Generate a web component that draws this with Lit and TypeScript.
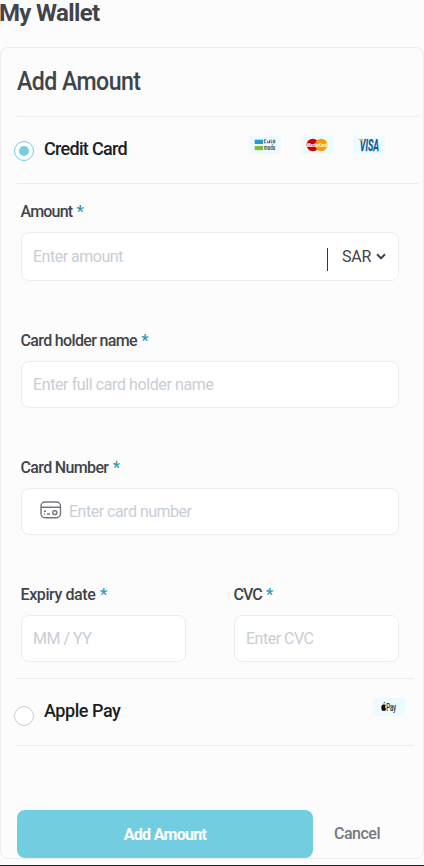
import { LitElement, html, css, svg } from "lit";
import { customElement, property } from "lit/decorators.js";

@customElement("pay-badge")
class PayBadge extends LitElement {
  @property() kind = "visa";
  static styles = css`
    :host { display: block; width: 32px; height: 18px; background: #ebfbff; }
    svg { display: block; overflow: visible; }
    text { font-family: Roboto, "Liberation Sans", sans-serif; }
  `;
  private art() {
    switch (this.kind) {
      case "mada":
        return svg`
          <rect x="5.700" y="3.700" width="8.300" height="4.300" fill="#259bd6"></rect>
          <rect x="5.700" y="10" width="8.300" height="4.200" fill="#84b740"></rect>
          <path d="M17.300 3.800h-2v3h2M18.700 4.600v2.200h1.800v-2.500M22 3.500v3.300h1.300M24.200 4.200h1.600v2.600h-1.600z" fill="none" stroke="#4b5054" stroke-width=".9"></path>
          <text x="14.800" y="14.200" font-size="6.500" font-weight="700" textLength="11.400" lengthAdjust="spacingAndGlyphs" fill="#4b5054">mada</text>`;
      case "mastercard":
        return svg`
          <circle cx="11.800" cy="9" r="6.200" fill="#cc0000"></circle>
          <circle cx="20.200" cy="9" r="6.200" fill="#ff9900"></circle>
          <text x="6" y="11" font-size="5.600" font-weight="900" font-style="italic" textLength="19.800" lengthAdjust="spacingAndGlyphs" fill="#fff">MasterCard</text>`;
      case "apple":
        return svg`
          <path d="M10.600 5.800c0-1 .6-1.800 1.300-2 .1 1-.5 1.900-1.300 2zM8.300 9.500c0-2 1-3.300 2.200-3 .5.200.6.200 1 0 .5-.2 1-.1 1.400.6-1 .9-.9 3 .2 3.700-.5 1.700-1.100 2.400-1.800 2.100-.4-.2-.7-.2-1.100 0-1 .4-1.900-1.400-1.900-3.400z" fill="#111"></path>
          <text x="13.200" y="12.600" font-size="10.500" textLength="9.800" lengthAdjust="spacingAndGlyphs" fill="#222" stroke="#222" stroke-width=".2">Pay</text>`;
      default:
        return svg`
          <text x="6.800" y="14.800" font-size="16" font-weight="700" font-style="italic" textLength="19.200" lengthAdjust="spacingAndGlyphs" fill="#0e5a9d" stroke="#0e5a9d" stroke-width=".25">VISA</text>
          <path d="M5.800 3h3.600l.9 4.500c-.8-1.600-2.200-2.900-4.500-3.700z" fill="#f5a623"></path>`;
    }
  }
  render() {
    return html`<svg width="32" height="18" viewBox="0 0 32 18">${this.art()}</svg>`;
  }
}

@customElement("form-field")
class FormField extends LitElement {
  @property() label = "";
  @property() hint = "";
  static styles = css`
    :host { display: block; }
    .label { height: 20px; line-height: 20px; font-size: 16px; font-weight: 500; color: #414449; white-space: nowrap; margin-left: -0.5px; letter-spacing: var(--label-spacing, -0.65px); }
    .star { color: #2f9ab5; font-weight: 700; margin-left: 1px; }
    .box { box-sizing: border-box; height: var(--box-height, 47px); margin-top: 10px; border: 1px solid #ededee; border-radius: 8px; background: #fff; display: flex; align-items: center; padding: 0 12px 0 11px; }
    .hint { flex: 1; font-size: 16px; line-height: 20px; color: #c8ced5; white-space: nowrap; letter-spacing: var(--hint-spacing, -0.5px); }
  `;
  render() {
    return html`
      <div class="label">${this.label} <span class="star">*</span></div>
      <div class="box"><slot name="lead"></slot><span class="hint">${this.hint}</span><slot name="trail"></slot></div>
    `;
  }
}

@customElement("app-root")
class AppRoot extends LitElement {
  static styles = css`
    :host { display: block; box-sizing: border-box; height: 866px; background: #fcfcfc; border-bottom: 1px solid #1c1c1f; overflow: hidden; font-family: Roboto, "Liberation Sans", sans-serif; color: #414449; }
    .title { margin: 0 0 0 -1px; height: 47px; line-height: 26px; font-size: 24px; font-weight: 700; letter-spacing: -0.65px; }
    .card { box-sizing: border-box; width: 424px; height: 812px; border: 1px solid #ededee; border-radius: 8px; padding: 0 5px 0 16px; }
    .heading { margin: 0; height: 68px; line-height: 67px; font-size: 25px; font-weight: 500; letter-spacing: -0.6px; transform: scaleX(0.925); transform-origin: left; }
    .method { box-sizing: border-box; height: 68px; border-top: 1px solid #ededee; border-bottom: 1px solid #ededee; display: flex; align-items: flex-start; }
    .method.apple { margin-top: 16px; margin-right: 4px; }
    .radio { box-sizing: border-box; width: 20px; height: 20px; border: 1px solid #c9cdd2; border-radius: 50%; margin: 24px 10px 0 -3px; padding: 4px; background: #fff; }
    .apple .radio { margin-top: 27px; }
    .radio.on { border-color: #72cde0; }
    .dot { width: 10px; height: 10px; border-radius: 50%; background: #72cde0; }
    .name { flex: 1; margin-top: 22px; line-height: 20px; font-size: 18px; font-weight: 500; color: #1d1e22; letter-spacing: -0.7px; }
    .apple .name { letter-spacing: -0.45px; }
    .badges { display: flex; gap: 20px; margin: 19px 33px 0 0; }
    .apple .badges { margin-right: 9px; }
    .fields { display: grid; grid-template-columns: 165px 165px; column-gap: 48px; padding: 18px 0 0 4px; }
    .wide { grid-column: 1 / -1; }
    .amount { --box-height: 49px; --label-spacing: -0.8px; height: 129px; }
    .holder, .number { height: 127px; }
    .holder { --hint-spacing: -0.4px; }
    .expiry { --label-spacing: -0.4px; }
    .cvc { --label-spacing: -0.9px; }
    .divider { width: 1px; height: 23px; background: #34363a; margin: 5px 14px 0 0; }
    .currency { font-size: 16px; line-height: 20px; letter-spacing: -0.3px; margin-right: 5px; }
    .lead { margin: -3px 7px 0 7px; }
    .actions { display: flex; height: 48px; margin-top: 64px; }
    .submit, .cancel { font: inherit; border: 0; padding: 0; font-size: 16px; font-weight: 500; }
    .submit { width: 296px; border-radius: 8px; background: #72cde0; color: #fff; font-weight: 700; letter-spacing: -0.7px; }
    .cancel { background: none; color: #74797d; margin-left: 21px; letter-spacing: -0.5px; height: 46px; }
  `;
  render() {
    return html`
      <h1 class="title">My Wallet</h1>
      <section class="card">
        <h2 class="heading">Add Amount</h2>
        <div class="method">
          <div class="radio on"><div class="dot"></div></div>
          <div class="name">Credit Card</div>
          <div class="badges"><pay-badge kind="mada"></pay-badge><pay-badge kind="mastercard"></pay-badge><pay-badge kind="visa"></pay-badge></div>
        </div>
        <div class="fields">
          <form-field class="wide amount" label="Amount" hint="Enter amount">
            <div slot="trail" class="divider"></div>
            <span slot="trail" class="currency">SAR</span>
            <svg slot="trail" width="10" height="8" viewBox="0 0 10 8"><path d="M1 1.300l4 4 4-4" fill="none" stroke="#414449" stroke-width="2"></path></svg>
          </form-field>
          <form-field class="wide holder" label="Card holder name" hint="Enter full card holder name"></form-field>
          <form-field class="wide number" label="Card Number" hint="Enter card number">
            <svg slot="lead" class="lead" width="22" height="18" viewBox="0 0 22 18" fill="none" stroke="#73777c" stroke-width="1.400">
              <rect x="1" y="1" width="19.500" height="15.800" rx="4"></rect>
              <path d="M1 6.300h19.500M4 10.200h2M4.200 13h1M7 13h3"></path>
              <rect x="12.800" y="9.700" width="4" height="3.800" rx="1.500"></rect>
            </svg>
          </form-field>
          <form-field class="expiry" label="Expiry date" hint="MM / YY"></form-field>
          <form-field class="cvc" label="CVC" hint="Enter CVC"></form-field>
        </div>
        <div class="method apple">
          <div class="radio"></div>
          <div class="name">Apple Pay</div>
          <div class="badges"><pay-badge kind="apple"></pay-badge></div>
        </div>
        <div class="actions">
          <button class="submit">Add Amount</button>
          <button class="cancel">Cancel</button>
        </div>
      </section>
    `;
  }
}
